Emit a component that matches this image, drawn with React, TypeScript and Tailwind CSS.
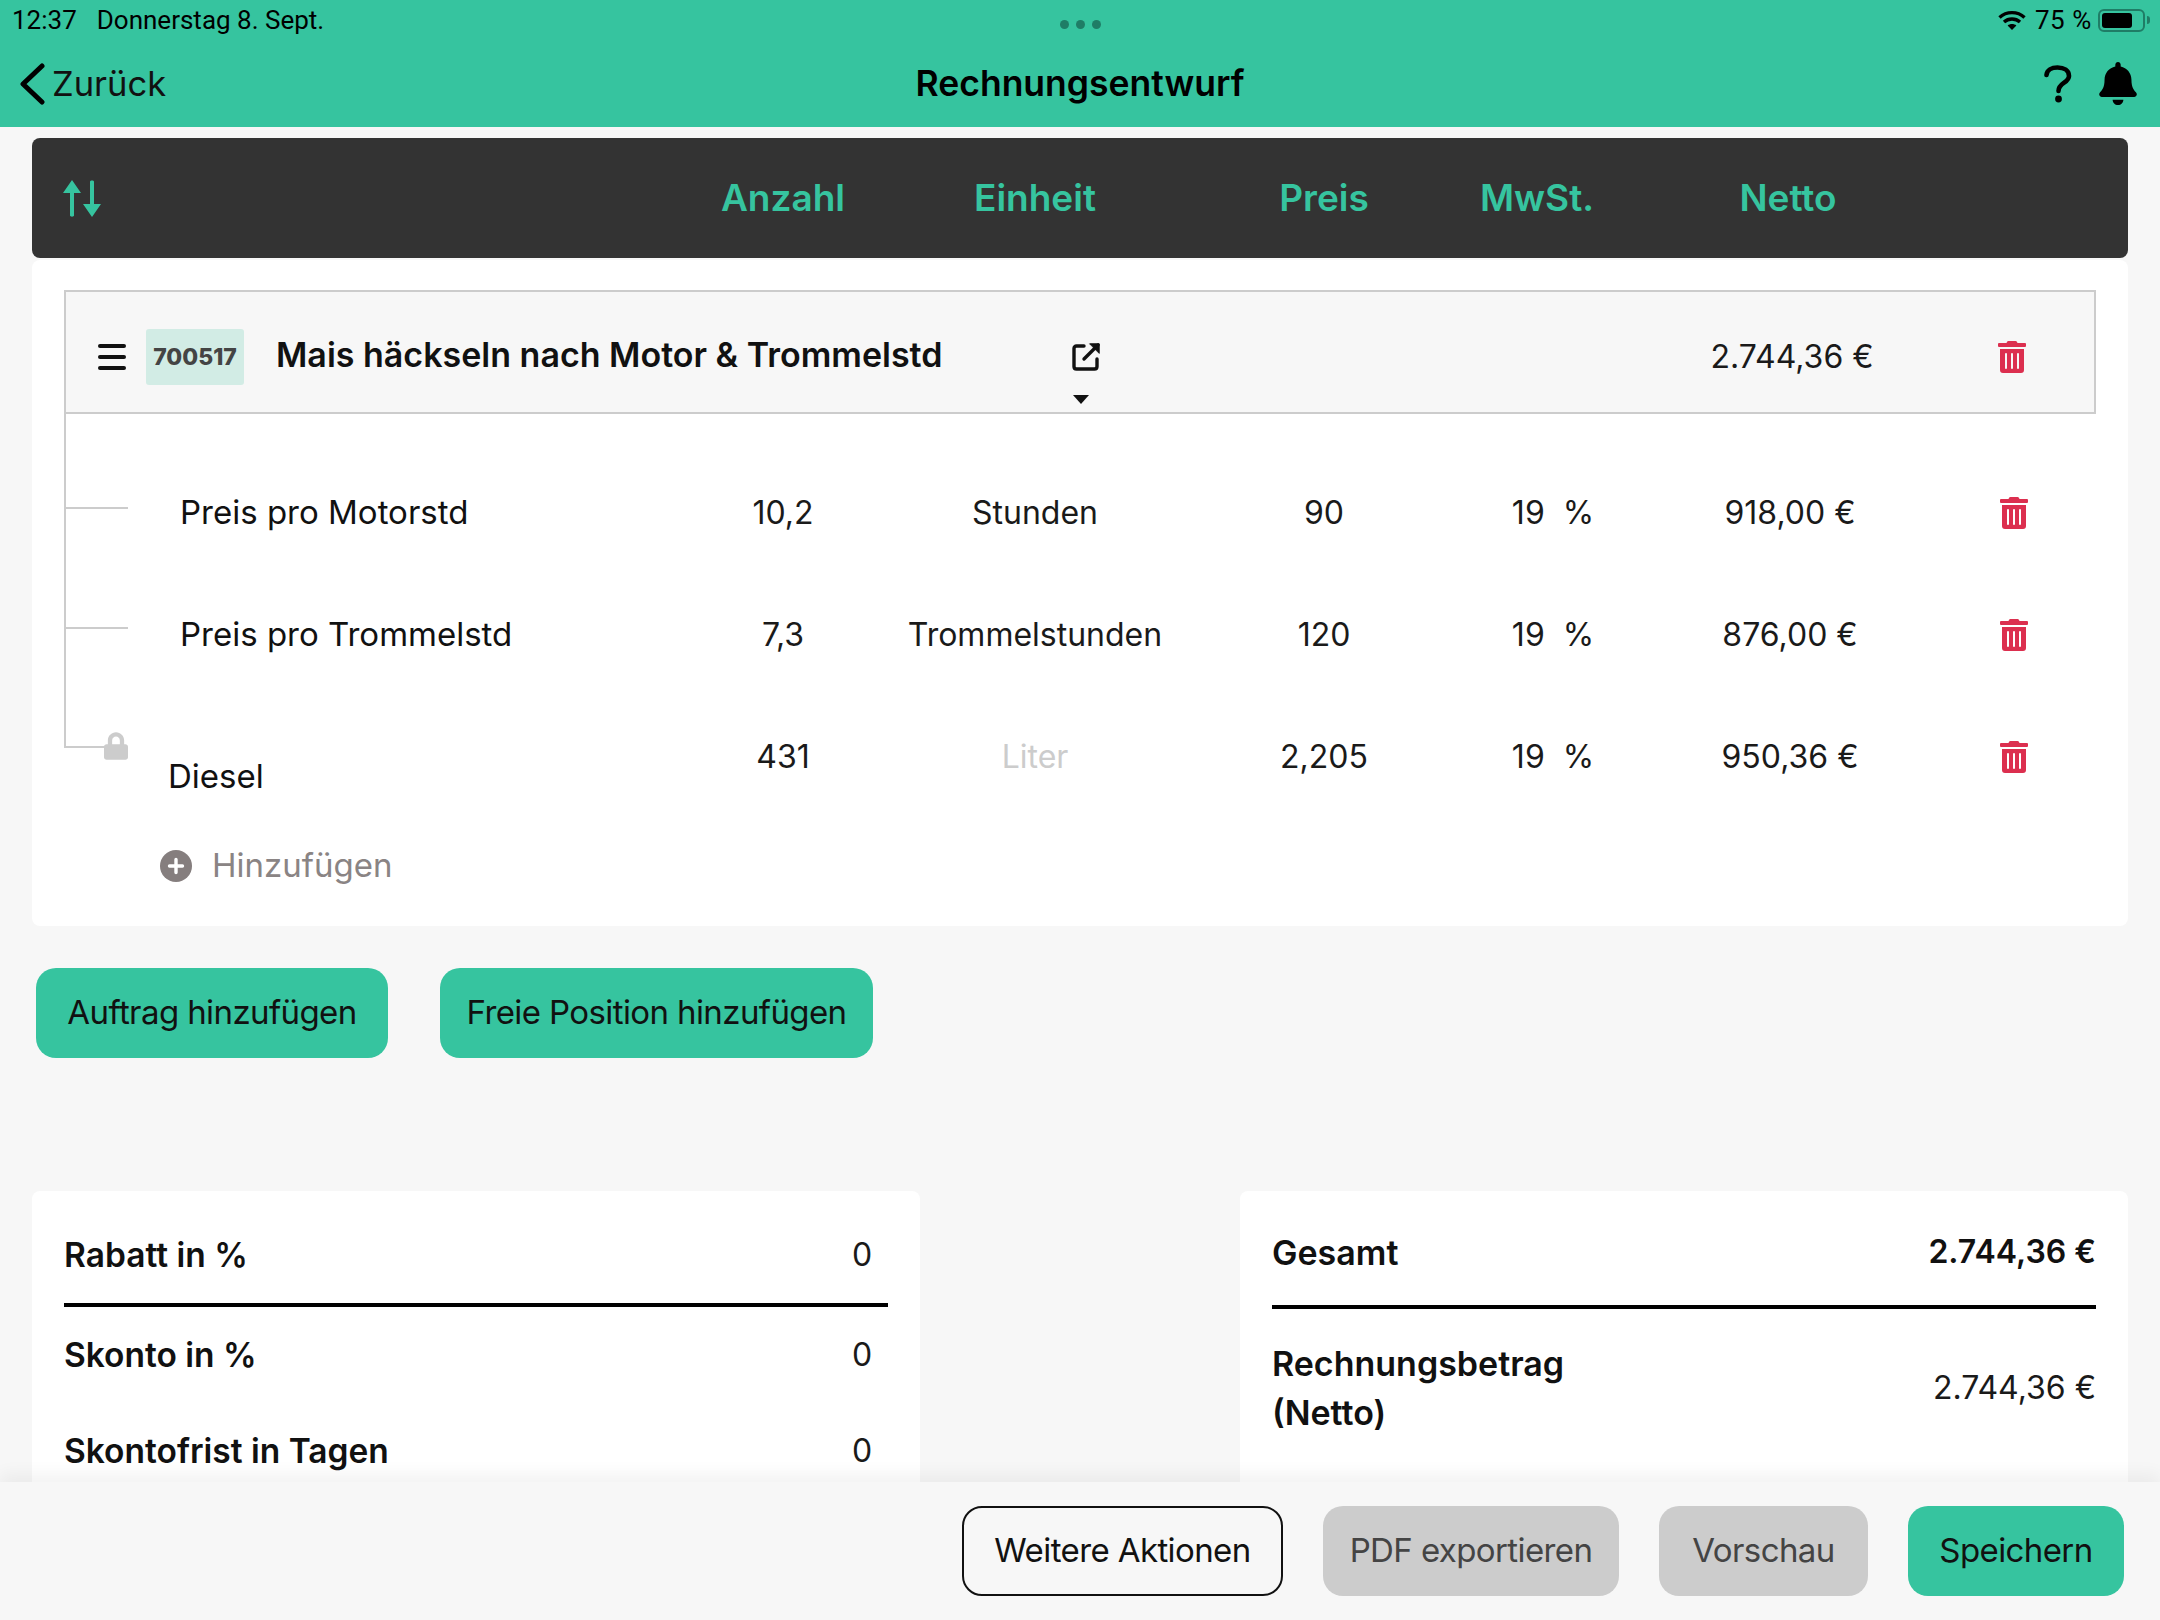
import { FaBell, FaLock, FaTrashAlt } from "react-icons/fa";

const label = "font-['Inter',sans-serif]";
const value = "font-['Inter',sans-serif] font-normal";
const cols = "grid grid-cols-[668px_166px_338px_240px_186px_316px_136px] items-center";

const rows = [
  { name: "Preis pro Motorstd", qty: "10,2", unit: "Stunden", price: "90", net: "918,00 €" },
  { name: "Preis pro Trommelstd", qty: "7,3", unit: "Trommelstunden", price: "120", net: "876,00 €" },
  { name: "Diesel", qty: "431", unit: "Liter", price: "2,205", net: "950,36 €", locked: true },
];

const StatusBar = () => (
  <div className="relative flex h-10 items-center justify-between pl-3 pr-[10px] font-['Roboto',sans-serif] text-[26px] text-black">
    <div className="flex gap-[20px]">
      <span>12:37</span>
      <span>Donnerstag 8. Sept.</span>
    </div>
    {/* multitasking dots */}
    <div className="absolute left-[1060px] top-[20px] flex gap-[7px]">
      <div className="h-[9px] w-[9px] rounded-full bg-[#1f7d66]" />
      <div className="h-[9px] w-[9px] rounded-full bg-[#1f7d66]" />
      <div className="h-[9px] w-[9px] rounded-full bg-[#1f7d66]" />
    </div>
    <div className="flex items-center">
      <svg width="28" height="20" viewBox="0 0 28 20" fill="none" stroke="black" strokeWidth="3.4">
        <path d="M1.5 7.5C8.5 1 19.5 1 26.5 7.5" />
        <path d="M6 12C10.5 8 17.5 8 22 12" />
        <path d="M14 20L9.6 15.6C12 13.6 16 13.6 18.4 15.6Z" fill="black" stroke="none" />
      </svg>
      <span className="ml-[9px] tracking-[0.6px]">75 %</span>
      <div className="ml-[6px] flex h-[23px] w-[47px] items-center rounded-[6px] border-2 border-[#1f7d66] p-[2px]">
        <div className="h-full w-[30px] rounded-[3px] bg-black" />
      </div>
      <div className="ml-[2px] h-[8px] w-[3px] rounded-r-full bg-[#1f7d66]" />
    </div>
  </div>
);

const NavBar = () => (
  <div className="grid h-[87px] grid-cols-[1fr_auto_1fr] items-center">
    <div className="flex items-center pl-[19px]">
      <svg width="26" height="42" viewBox="0 0 26 42" fill="none" stroke="black" strokeWidth="5" strokeLinecap="round" strokeLinejoin="round">
        <path d="M23 3L4 21L23 39" />
      </svg>
      <span className={`${label} ml-[7px] text-[34.5px] text-[#111]`}>Zurück</span>
    </div>
    <h1 className={`${label} text-[35.5px] font-semibold text-black`}>Rechnungsentwurf</h1>
    <div className="flex items-center justify-end pr-[23px]">
      <svg width="28" height="38" viewBox="0 0 28 38" fill="none" stroke="black" strokeWidth="4.6" strokeLinecap="round">
        <path d="M2.5 10C3 5 7.5 2.5 13.5 2.5C20 2.5 25 5.5 25 11C25 18 14.5 17.5 14.5 26" />
        <circle cx="14.5" cy="34" r="3.4" fill="black" stroke="none" />
      </svg>
      <FaBell className="ml-[27px] h-[43px] w-[38px] text-black" />
    </div>
  </div>
);

const SortIcon = () => (
  <svg width="38" height="37" viewBox="0 0 38 37" fill="#36c49f" stroke="none">
    <path d="M9 0L18 13H11V35.5C11 37 7 37 7 35.5V13H0Z" />
    <path d="M29 37L20 24H27V1.5C27 0 31 0 31 1.5V24H38Z" />
  </svg>
);

const ExternalIcon = () => (
  <svg width="29" height="29" viewBox="0 0 29 29" fill="none" stroke="#111" strokeWidth="3.4" strokeLinecap="round" strokeLinejoin="round">
    <path d="M12 4H4.5C3 4 2 5 2 6.5V24.5C2 26 3 27 4.5 27H22.5C24 27 25 26 25 24.5V17" />
    <path d="M12 17L26 3" />
    <path d="M18 1.8H27.2V11Z" fill="#111" strokeWidth="1" />
  </svg>
);

const AddIcon = () => (
  <svg width="32" height="32" viewBox="0 0 32 32">
    <circle cx="16" cy="16" r="16" fill="#857e7e" />
    <path d="M16 9.5V22.5M9.5 16H22.5" stroke="white" strokeWidth="3.4" strokeLinecap="round" />
  </svg>
);

const TreeLines = () => (
  <>
    <div className="absolute left-[32px] top-0 h-[333px] w-[2px] bg-[#ccc]" />
    <div className="absolute left-[32px] top-[93px] h-[2px] w-[64px] bg-[#ccc]" />
    <div className="absolute left-[32px] top-[213px] h-[2px] w-[64px] bg-[#ccc]" />
    <div className="absolute left-[32px] top-[332px] h-[2px] w-[42px] bg-[#ccc]" />
    <FaLock className="absolute left-[72px] top-[318px] h-[28px] w-[24px] text-[#ccc]" />
  </>
);

const Positions = () => (
  <div className="rounded-[8px] bg-white px-8 pt-[30px]">
    {/* Auftrag Kopfzeile */}
    <div className="relative flex h-[124px] items-center border-2 border-[#ccc] bg-[#f7f7f7] pl-[32px] pt-[10px]">
      <div className="flex w-[28px] flex-col gap-[7px]">
        <div className="h-[4px] rounded-full bg-[#111]" />
        <div className="h-[4px] rounded-full bg-[#111]" />
        <div className="h-[4px] rounded-full bg-[#111]" />
      </div>
      <div className={`${label} ml-[20px] flex h-[56px] w-[98px] items-center justify-center rounded-[3px] bg-[#d2ece5] text-[23px] font-extrabold text-[#444]`}>
        700517
      </div>
      <div className={`${label} ml-[32px] w-[796px] pb-[6px] text-[34px] font-semibold text-[#111]`}>
        Mais häckseln nach Motor &amp; Trommelstd
      </div>
      <div className="-mt-[2px] flex">
        <ExternalIcon />
      </div>
      <div className={`${value} ml-[529px] w-[324px] text-center text-[32px] text-[#1a1a1a]`}>2.744,36 €</div>
      <FaTrashAlt className="ml-[44px] h-[32px] w-[28px] text-[#dc2f4f]" />
      <div className="absolute left-[1007px] top-[103px] border-x-[8px] border-t-[9px] border-x-transparent border-t-[#111]" />
    </div>
    <div className="relative -mx-8 pb-3 pt-[38px]">
      <TreeLines />
      {rows.map((row) => (
        <div key={row.name} className={`${cols} h-[122px] text-[#1a1a1a]`}>
          <div className={`${label} ${row.locked ? "pl-[136px] pt-10" : "pl-[148px]"} text-[33px] text-[#111]`}>{row.name}</div>
          <div className={`${value} text-center text-[32px]`}>{row.qty}</div>
          <div className={`${row.locked ? "text-[#ccc]" : ""} ${value} text-center text-[32px]`}>{row.unit}</div>
          <div className={`${value} text-center text-[32px]`}>{row.price}</div>
          <div className={`${value} whitespace-pre pl-8 text-center text-[32px]`}>{"19  %"}</div>
          <div className={`${value} pl-1 text-center text-[32px]`}>{row.net}</div>
          <div className="flex justify-center">
            <FaTrashAlt className="h-[32px] w-[28px] text-[#dc2f4f]" />
          </div>
        </div>
      ))}
      <div className="flex h-[96px] items-center pl-[128px]">
        <AddIcon />
        <span className={`${label} ml-[20px] text-[33px] text-[#8a8484]`}>Hinzufügen</span>
      </div>
    </div>
  </div>
);

const Summary = () => (
  <div className="mt-[133px] flex justify-between">
    <div className="h-[400px] w-[888px] rounded-[8px] bg-white px-8">
      <div className="flex h-[116px] items-center justify-between border-b-4 border-black pb-[2px] pt-[18px]">
        <span className={`${label} text-[33.5px] font-semibold text-[#111]`}>Rabatt in %</span>
        <span className={`${value} w-[52px] text-center text-[32px] text-[#1a1a1a]`}>0</span>
      </div>
      <div className="flex h-[96px] items-center justify-between">
        <span className={`${label} text-[33.5px] font-semibold text-[#111]`}>Skonto in %</span>
        <span className={`${value} w-[52px] text-center text-[32px] text-[#1a1a1a]`}>0</span>
      </div>
      <div className="flex h-[96px] items-center justify-between">
        <span className={`${label} text-[33.5px] font-semibold text-[#111]`}>Skontofrist in Tagen</span>
        <span className={`${value} w-[52px] text-center text-[32px] text-[#1a1a1a]`}>0</span>
      </div>
    </div>
    <div className="h-[400px] w-[888px] rounded-[8px] bg-white px-8">
      <div className="flex h-[118px] items-center justify-between border-b-4 border-black pt-[8px]">
        <span className={`${label} text-[34px] font-semibold text-[#111]`}>Gesamt</span>
        <span className={`${label} text-[32px] font-semibold text-[#111]`}>2.744,36 €</span>
      </div>
      <div className="flex items-center justify-between pt-[30px]">
        <span className={`${label} text-[34px] font-semibold leading-[49px] text-[#111]`}>
          Rechnungsbetrag
          <br />
          (Netto)
        </span>
        <span className={`${value} text-[32px] text-[#1a1a1a]`}>2.744,36 €</span>
      </div>
    </div>
  </div>
);

export default function App() {
  return (
    <div className="flex h-[1620px] w-[2160px] flex-col overflow-hidden bg-[#f7f7f7]">
      <div className="h-[127px] shrink-0 bg-[#36c49f]">
        <StatusBar />
        <NavBar />
      </div>

      <div className="min-h-0 flex-1 overflow-hidden px-8 pt-[11px]">
        <div className={`${cols} mb-[2px] h-[120px] rounded-[8px] bg-[#333] text-center text-[37px] font-semibold text-[#36c49f]`}>
          <div className="flex pl-[31px]">
            <SortIcon />
          </div>
          <span className={label}>Anzahl</span>
          <span className={label}>Einheit</span>
          <span className={label}>Preis</span>
          <span className={label}>MwSt.</span>
          <span className={label}>Netto</span>
        </div>

        <Positions />

        <div className={`${label} mt-[42px] flex gap-[52px] pl-1 text-[33px] tracking-[-0.6px] text-[#111]`}>
          <button className="h-[90px] w-[352px] rounded-[20px] bg-[#36c49f]">Auftrag hinzufügen</button>
          <button className="h-[90px] w-[433px] rounded-[20px] bg-[#36c49f]">Freie Position hinzufügen</button>
        </div>

        <Summary />
      </div>

      <div className={`${label} relative z-10 flex h-[138px] shrink-0 items-center justify-end gap-10 bg-[#f7f7f7] pr-9 text-[33px] tracking-[-0.6px] shadow-[0_-8px_16px_rgba(0,0,0,0.05)]`}>
        <button className="h-[90px] w-[321px] rounded-[20px] border-2 border-[#111] text-[#111]">Weitere Aktionen</button>
        <button className="h-[90px] w-[296px] rounded-[20px] bg-[#ccc] text-[#444]">PDF exportieren</button>
        <button className="h-[90px] w-[209px] rounded-[20px] bg-[#ccc] text-[#444]">Vorschau</button>
        <button className="h-[90px] w-[216px] rounded-[20px] bg-[#36c49f] text-[#111]">Speichern</button>
      </div>
    </div>
  );
}
